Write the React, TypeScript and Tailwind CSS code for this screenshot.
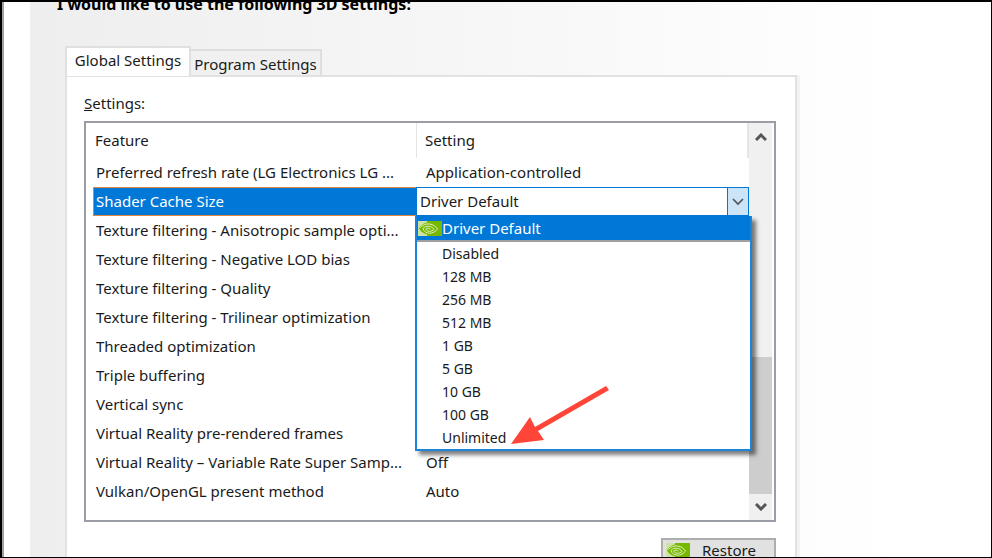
import React, {useState} from 'react';

const features = [
    {name: 'Preferred refresh rate (LG Electronics LG ...', value: 'Application-controlled'},
    {name: 'Shader Cache Size', value: ''},
    {name: 'Texture filtering - Anisotropic sample opti...', value: ''},
    {name: 'Texture filtering - Negative LOD bias', value: ''},
    {name: 'Texture filtering - Quality', value: ''},
    {name: 'Texture filtering - Trilinear optimization', value: ''},
    {name: 'Threaded optimization', value: ''},
    {name: 'Triple buffering', value: ''},
    {name: 'Vertical sync', value: ''},
    {name: 'Virtual Reality pre-rendered frames', value: ''},
    {name: 'Virtual Reality – Variable Rate Super Samp...', value: 'Off'},
    {name: 'Vulkan/OpenGL present method', value: 'Auto'},
];

const cacheSizes = ['Disabled', '128 MB', '256 MB', '512 MB', '1 GB', '5 GB', '10 GB', '100 GB', 'Unlimited'];

const NvidiaIcon: React.FC = () => (
    <svg viewBox="0 0 24 15" className="h-[15px] w-6 shrink-0" aria-hidden="true">
        <rect width="24" height="15" fill="#cfe3a6"/>
        <path d="M9 0h15v15H9z" fill="#76b900"/>
        <path d="M1 7.300C3.500 3.200 7 1.300 11 1.500c5 .3 8.500 2.800 10.500 6-3 4-6.500 6-10.500 6-4.500 0-8-2.200-10-6.200z" fill="#76b900"/>
        <path
            d="M2.500 6.500C5 3.600 8 2.600 11.500 3c4 .4 6.500 2.700 8 5.200-2.300 2.600-5 4-8 4-3.200 0-5.700-1.800-6.500-4.700C6.500 5.600 9 4.900 11.300 5.300c2.200.4 3.800 1.600 4.700 3-1.300 1.300-2.800 2-4.700 2-1.700 0-3-.8-3.600-2.300 1.200-1.200 3.300-1.300 4.800.2"
            fill="none" stroke="#e2f0c4" strokeWidth="1"/>
    </svg>
);

const Chevron: React.FC<{up?: boolean; bold?: boolean}> = ({up, bold}) => (
    <svg viewBox="0 0 12 8" className="h-2 w-3" aria-hidden="true">
        <path d={up ? 'M1 7l5-5 5 5' : 'M1 1l5 5 5-5'} fill="none" stroke="#555555" strokeWidth={bold ? 3 : 1.7}/>
    </svg>
);

const App: React.FC = () => {
    const [cacheSize, setCacheSize] = useState('Driver Default');

    return (
        <div
            className="flex h-screen overflow-hidden border-2 border-r border-b border-black bg-white font-['Noto_Sans',sans-serif] text-[15px] leading-5 text-[#1a1a1a]">
            <div className="w-7 shrink-0 border-l-2 border-[#a0a0a0]"/>
            <main className="flex min-w-0 flex-1 flex-col bg-linear-to-r from-[#eeeeee] to-white to-90% pr-[194px] pl-[35px]">
                <h1 className="-mt-2 -ml-2 text-base leading-5 font-bold text-black">
                    I would like to use the following 3D settings:
                </h1>

                {/* Tabs */}
                <div className="mt-8 flex items-end" role="tablist">
                    <button
                        role="tab"
                        aria-selected="true"
                        className="relative z-10 -mb-px h-[30px] w-[126px] border-2 border-b-0 border-[#e0e0e0] bg-white pb-1"
                    >
                        Global Settings
                    </button>
                    <button
                        role="tab"
                        aria-selected="false"
                        className="h-[26px] w-[131px] border-2 border-b-0 border-l-0 border-[#dedede] bg-[#f0f0f0] pt-0.5"
                    >
                        Program Settings
                    </button>
                </div>

                <section className="flex-1 border-2 border-b-0 border-[#e2e2e2] bg-white pt-4 pr-[19px] pl-[17px] shadow-[3px_0_0_#f3f3f3]">
                    <p><u>S</u>ettings:</p>

                    <div className="mt-2 flex border-2 border-[#9a9da6] pl-[7px]">
                        <div className="min-w-0 flex-1 pb-[14px]">
                            <table className="w-full table-fixed border-separate border-spacing-0 text-left whitespace-nowrap">
                                <thead>
                                    <tr className="h-[35px]">
                                        <th className="w-[323px] p-0 pb-0.5 pl-0.5 font-normal">Feature</th>
                                        <th className="border-r-2 border-l border-[#e5e5e5] p-0 pb-0.5 pl-2 font-normal">Setting</th>
                                    </tr>
                                </thead>
                                <tbody>
                                    {features.map((feature) => feature.name === 'Shader Cache Size' ? (
                                        <tr key={feature.name} className="h-[29px]">
                                            <td className="border border-r-0 border-[#e8833a] bg-[#0078d7] p-0 pb-0.5 pl-0.5 text-white">
                                                <label htmlFor="cache-size">{feature.name}</label>
                                            </td>
                                            <td className="relative p-0">
                                                <div className="flex h-[29px] border border-[#0078d7] bg-white">
                                                    <select
                                                        id="cache-size"
                                                        value={cacheSize}
                                                        onChange={(e) => setCacheSize(e.target.value)}
                                                        className="min-w-0 flex-1 appearance-none pb-0.5 pl-[3px] outline-none"
                                                    >
                                                        <option>Driver Default</option>
                                                        {cacheSizes.map((size) => <option key={size}>{size}</option>)}
                                                    </select>
                                                    <span
                                                        className="flex w-[21px] items-center justify-center border-l border-[#0078d7] bg-[#cce4f7]">
                                                        <Chevron/>
                                                    </span>
                                                </div>

                                                {/* Open list of cache sizes */}
                                                <div
                                                    className="absolute top-full -right-[3px] -left-px z-20 border-2 border-t-0 border-[#1a84da] bg-white shadow-[4px_4px_4px_rgba(0,0,0,0.5)]">
                                                    <button
                                                        onClick={() => setCacheSize('Driver Default')}
                                                        className="flex h-[26px] w-full items-center border-b-2 border-[#a0a0a0] bg-[#0078d7] pl-px text-white"
                                                    >
                                                        <NvidiaIcon/>
                                                        Driver Default
                                                    </button>
                                                    <ul>
                                                        {cacheSizes.map((size) => (
                                                            <li key={size}>
                                                                <button
                                                                    onClick={() => setCacheSize(size)}
                                                                    className="block h-[23px] w-full pl-[25px] text-left text-sm"
                                                                >
                                                                    {size}
                                                                </button>
                                                            </li>
                                                        ))}
                                                    </ul>
                                                    <svg
                                                        viewBox="0 0 98 60"
                                                        className="absolute bottom-1 left-[94px] h-[60px] w-[98px]"
                                                        aria-hidden="true"
                                                    >
                                                        <path d="M0 59L19 32L24 42L95 1L98 5L27 46L33 55Z" fill="#ff4438"/>
                                                    </svg>
                                                </div>
                                            </td>
                                        </tr>
                                    ) : (
                                        <tr key={feature.name} className="h-[29px]">
                                            <td className="p-0 pb-0.5 pl-[3px]">{feature.name}</td>
                                            <td className="p-0 pb-0.5 pl-[10px]">{feature.value}</td>
                                        </tr>
                                    ))}
                                </tbody>
                            </table>
                        </div>

                        {/* Scrollbar */}
                        <div className="mr-0.5 flex w-[23px] flex-col bg-[#f0f0f0]">
                            <button aria-label="Scroll up" className="flex h-[27px] items-center justify-center">
                                <Chevron up bold/>
                            </button>
                            <div className="flex-[206]"/>
                            <div className="flex-[137] bg-[#cdcdcd]"/>
                            <button aria-label="Scroll down" className="flex h-[26px] items-center justify-center">
                                <Chevron bold/>
                            </button>
                        </div>
                    </div>

                    <div className="mt-4 flex justify-end">
                        <button className="flex h-7 w-[115px] items-center gap-3 border-2 border-[#adadad] bg-[#e1e1e1] pb-1 pl-[3px]">
                            <NvidiaIcon/>
                            <span>Res<u>t</u>ore</span>
                        </button>
                    </div>
                </section>
            </main>
        </div>
    );
};

export default App;
